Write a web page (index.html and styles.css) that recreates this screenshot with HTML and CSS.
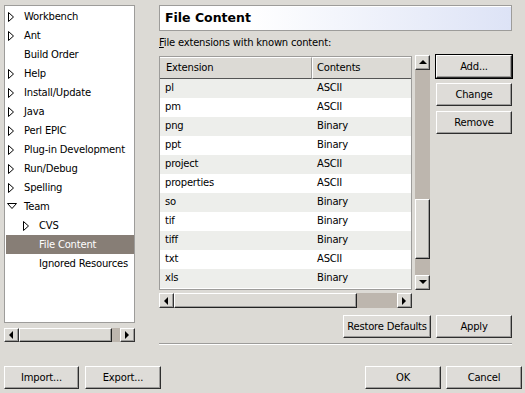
FILE: index.html
```html
<!DOCTYPE html>
<html lang="en">
<head>
    <meta charset="UTF-8">
    <title>Preferences - File Content</title>
    <link rel="stylesheet" href="styles.css">
</head>
<body>
<div class="window">
    <div class="top">
        <div class="side">
            <div class="tree">
                <div class="node"><span class="tw"><svg width="7" height="10"><polygon points="0.5,0.5 5.5,5 0.5,9.5" /></svg></span>Workbench</div>
                <div class="node"><span class="tw"><svg width="7" height="10"><polygon points="0.5,0.5 5.5,5 0.5,9.5" /></svg></span>Ant</div>
                <div class="node"><span class="tw"></span>Build Order</div>
                <div class="node"><span class="tw"><svg width="7" height="10"><polygon points="0.5,0.5 5.5,5 0.5,9.5" /></svg></span>Help</div>
                <div class="node"><span class="tw"><svg width="7" height="10"><polygon points="0.5,0.5 5.5,5 0.5,9.5" /></svg></span>Install/Update</div>
                <div class="node"><span class="tw"><svg width="7" height="10"><polygon points="0.5,0.5 5.5,5 0.5,9.5" /></svg></span>Java</div>
                <div class="node"><span class="tw"><svg width="7" height="10"><polygon points="0.5,0.5 5.5,5 0.5,9.5" /></svg></span>Perl EPIC</div>
                <div class="node"><span class="tw"><svg width="7" height="10"><polygon points="0.5,0.5 5.5,5 0.5,9.5" /></svg></span>Plug-in Development</div>
                <div class="node"><span class="tw"><svg width="7" height="10"><polygon points="0.5,0.5 5.5,5 0.5,9.5" /></svg></span>Run/Debug</div>
                <div class="node"><span class="tw"><svg width="7" height="10"><polygon points="0.5,0.5 5.5,5 0.5,9.5" /></svg></span>Spelling</div>
                <div class="node"><span class="tw open"><svg width="10" height="7"><polygon points="0.5,0.5 9.5,0.5 5,5.5" /></svg></span>Team</div>
                <div class="node sub"><span class="tw"><svg width="7" height="10"><polygon points="0.5,0.5 5.5,5 0.5,9.5" /></svg></span>CVS</div>
                <div class="node sub selected"><span class="tw"></span>File Content</div>
                <div class="node sub"><span class="tw"></span>Ignored Resources</div>
            </div>
            <div class="hbar tree-bar">
                <span class="sbtn"><svg width="5" height="8"><polygon points="4,0 4,8 0,4" /></svg></span>
                <span class="thumb tree-thumb"></span>
                <span class="trough"></span>
                <span class="sbtn"><svg width="5" height="8"><polygon points="0,0 0,8 4,4" /></svg></span>
            </div>
        </div>

        <div class="main">
            <div class="title">File Content</div>
            <div class="label"><u>F</u>ile extensions with known content:</div>

            <div class="list-area">
                <div class="list-col">
                    <div class="list-row">
                        <div class="table">
                            <div class="th">Extension</div><div class="th last">Contents</div>
                            <div class="td odd">pl</div><div class="td odd">ASCII</div>
                            <div class="td">pm</div><div class="td">ASCII</div>
                            <div class="td odd">png</div><div class="td odd">Binary</div>
                            <div class="td">ppt</div><div class="td">Binary</div>
                            <div class="td odd">project</div><div class="td odd">ASCII</div>
                            <div class="td">properties</div><div class="td">ASCII</div>
                            <div class="td odd">so</div><div class="td odd">Binary</div>
                            <div class="td">tif</div><div class="td">Binary</div>
                            <div class="td odd">tiff</div><div class="td odd">Binary</div>
                            <div class="td">txt</div><div class="td">ASCII</div>
                            <div class="td odd">xls</div><div class="td odd">Binary</div>
                        </div>
                        <div class="vbar">
                            <span class="sbtn"><svg width="8" height="5"><polygon points="0,4 8,4 4,0" /></svg></span>
                            <span class="trough vt-top"></span>
                            <span class="thumb vt-thumb"></span>
                            <span class="trough vt-bottom"></span>
                            <span class="sbtn"><svg width="8" height="5"><polygon points="0,0 8,0 4,4" /></svg></span>
                        </div>
                    </div>
                    <div class="hbar list-bar">
                        <span class="sbtn"><svg width="5" height="8"><polygon points="4,0 4,8 0,4" /></svg></span>
                        <span class="thumb list-thumb"></span>
                        <span class="trough"></span>
                        <span class="sbtn"><svg width="5" height="8"><polygon points="0,0 0,8 4,4" /></svg></span>
                    </div>
                </div>
                <div class="side-buttons">
                    <button class="btn default">Add...</button>
                    <button class="btn">Change</button>
                    <button class="btn">Remove</button>
                </div>
            </div>

            <div class="apply-row">
                <button class="btn wide">Restore Defaults</button>
                <button class="btn">Apply</button>
            </div>
            <div class="sep"></div>
        </div>
    </div>

    <div class="bottom">
        <button class="btn">Import...</button>
        <button class="btn">Export...</button>
        <span class="spacer"></span>
        <button class="btn">OK</button>
        <button class="btn">Cancel</button>
    </div>
</div>
</body>
</html>
```

FILE: styles.css
```css
body {
    margin: 0;
    background-color: #dcdad5;
    font-family: "DejaVu Sans", "Liberation Sans", sans-serif;
    font-size: 10px;
    letter-spacing: -0.2px;
    color: #000;
}
.window {
    width: 525px;
    height: 393px;
    display: flex;
    flex-direction: column;
}
.top {
    display: flex;
    height: 346px;
    padding: 5px 0 0 4px;
    box-sizing: border-box;
}

/* left tree */
.side {
    width: 131px;
    display: flex;
    flex-direction: column;
}
.tree {
    height: 318px;
    box-sizing: border-box;
    border: 1px solid #9d9c9a;
    background-color: #fff;
    padding: 1px 0 0 1px;
}
.node {
    height: 19px;
    display: flex;
    align-items: center;
    padding-left: 2px;
    white-space: nowrap;
}
.node.sub {
    padding-left: 17px;
}
.node.selected {
    background-color: #877e76;
    color: #fff;
}
.tw {
    width: 16px;
    flex: none;
    display: flex;
    align-items: center;
}
.tw svg polygon {
    fill: #fff;
    stroke: #000;
    stroke-width: 1;
}
.tw.open svg {
    margin-left: -1px;
}

/* scrollbars */
.hbar {
    display: flex;
    height: 15px;
}
.tree-bar {
    margin-top: 5px;
    height: 14px;
}
.sbtn {
    width: 15px;
    height: 15px;
    flex: none;
    box-sizing: border-box;
    background-color: #dcdad5;
    border: 1px solid;
    border-color: #fff #333 #333 #fff;
    box-shadow: inset -1px -1px #9d9c9a;
    display: flex;
    align-items: center;
    justify-content: center;
}
.tree-bar .sbtn {
    height: 14px;
}
.sbtn svg polygon {
    fill: #000;
}
.trough {
    flex: 1;
    background-color: #bdb6ae;
}
.thumb {
    flex: none;
    box-sizing: border-box;
    background-color: #dcdad5;
    border: 1px solid;
    border-color: #fff #222 #222 #fff;
    box-shadow: inset -1px -1px #9d9c9a;
}
.tree-thumb { width: 93px; }
.list-thumb { width: 183px; }

/* main area */
.main {
    margin-left: 24px;
    width: 353px;
    display: flex;
    flex-direction: column;
}
.title {
    height: 26px;
    box-sizing: border-box;
    border: 1px solid #9d9c9a;
    box-shadow: inset 1px 1px #fff;
    background: linear-gradient(to right, #ffffff 25%, #dde3f6);
    font-size: 12.5px;
    font-weight: bold;
    letter-spacing: 0;
    line-height: 24px;
    padding-left: 5px;
}
.label {
    margin-top: 5px;
    height: 14px;
    line-height: 14px;
}
.list-area {
    display: flex;
    margin-top: 5px;
}
.list-col {
    width: 271px;
}
.list-row {
    display: flex;
}
.table {
    width: 253px;
    height: 234px;
    margin-top: 1px;
    box-sizing: border-box;
    border: 1px solid #9d9c9a;
    background-color: #fff;
    display: grid;
    grid-template-columns: 152px 1fr;
    grid-auto-rows: 19px;
    grid-template-rows: 22px;
    align-content: start;
}
.th {
    background-color: #dcdad5;
    border-top: 1px solid #fff;
    border-bottom: 1px solid #555;
    border-right: 1px solid #9d9c9a;
    line-height: 20px;
    padding-left: 6px;
}
.th.last {
    border-left: 1px solid #fff;
    border-right: none;
    padding-left: 4px;
}
.td {
    line-height: 18px;
    padding-left: 5px;
}
.td.odd {
    background-color: #edeeeb;
}
.vbar {
    width: 15px;
    height: 235px;
    margin-left: 3px;
    display: flex;
    flex-direction: column;
}
.vt-top { flex: none; height: 129px; }
.vt-thumb { height: 60px; }
.vt-bottom { flex: none; height: 16px; }
.list-bar {
    margin-top: 3px;
    width: 253px;
}
.side-buttons {
    margin-left: 6px;
    display: flex;
    flex-direction: column;
    gap: 5px;
}
.apply-row {
    margin-top: 7px;
    display: flex;
    justify-content: flex-end;
    gap: 5px;
}
.sep {
    margin-top: 5px;
    height: 1px;
    border-top: 1px solid #9d9c9a;
    background-color: #fff;
}

/* buttons */
.btn {
    width: 76px;
    height: 23px;
    margin: 0;
    padding: 0;
    box-sizing: border-box;
    font-family: inherit;
    font-size: 10px;
    letter-spacing: -0.2px;
    color: #000;
    background-color: #dedcd8;
    border: 1px solid;
    border-color: #fff #2e2e2e #2e2e2e #fff;
    box-shadow: inset -1px -1px #9d9c9a;
}
.btn.default {
    outline: 1px solid #000;
}
.btn.wide {
    width: 88px;
}
.bottom {
    display: flex;
    gap: 5px;
    padding: 20px 3px 0 4px;
}
.bottom .btn:first-child {
    width: 75px;
    margin-right: 1px;
}
.spacer {
    flex: 1;
}
```
